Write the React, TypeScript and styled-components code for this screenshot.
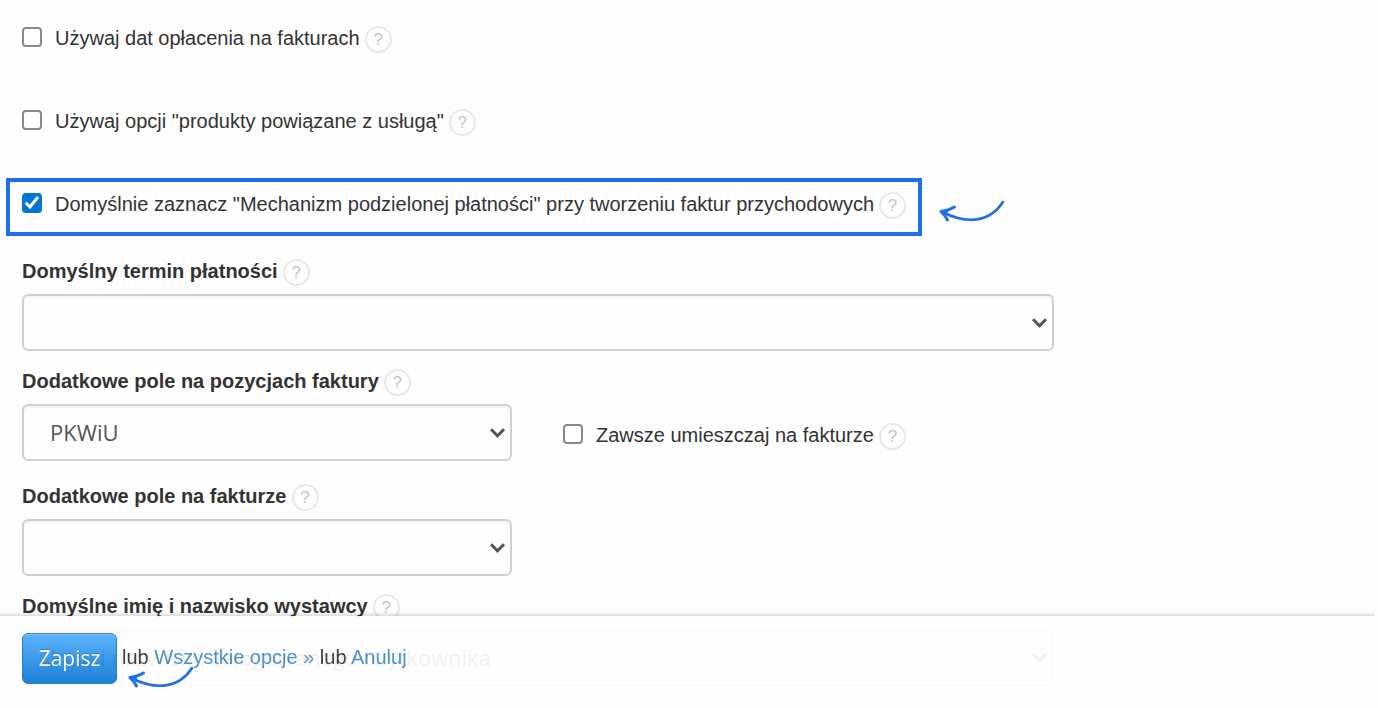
import React, { useId } from "react";
import styled, { createGlobalStyle } from "styled-components";

const GlobalStyle = createGlobalStyle`
  *, *::before, *::after { box-sizing: border-box; }
  body {
    margin: 0;
    background: #fefefe;
    color: #333;
    font-family: "Liberation Sans", Arial, sans-serif;
    font-size: 20px;
    line-height: 27px;
  }
`;

const Form = styled.form`
  padding: 12px 0 22px 6px;
`;

const OptionList = styled.div`
  display: flex;
  flex-direction: column;
  gap: 25px;
`;

const OptionLine = styled.div`
  display: flex;
  align-items: center;
  gap: 16px;
`;

const Option = styled.div<{ $highlighted?: boolean }>`
  display: flex;
  width: fit-content;
  padding: 10px 12px 13px 12px;
  border: 4px solid ${(p) => (p.$highlighted ? "#1f70e8" : "transparent")};
`;

const CheckLine = styled.div`
  display: flex;
  align-items: center;
  gap: 5px;
`;

const CheckLabel = styled.label`
  display: flex;
  gap: 13px;
  padding-bottom: 2px;
  line-height: 25px;
`;

const Checkbox = styled.input`
  appearance: none;
  display: grid;
  place-items: center;
  flex: none;
  width: 20px;
  height: 20px;
  margin: 1px 0 0;
  border: 2px solid #8a8a8a;
  border-radius: 4px;
  background: #fff;

  &:checked {
    border-color: #0075d3;
    background: #0075d3;
  }

  &:checked::before {
    content: "";
    width: 16px;
    height: 16px;
    background: #fff;
    clip-path: polygon(4% 54%, 17% 41%, 36% 61%, 80% 6%, 95% 18%, 38% 89%);
  }
`;

const Help = styled.button`
  flex: none;
  width: 27px;
  height: 27px;
  padding: 0;
  border: 2px solid #e8e8e8;
  border-radius: 50%;
  background: #fefefe;
  color: #c4c4c4;
  font: 17px/23px "Liberation Sans", Arial, sans-serif;
  text-align: center;
`;

const Fields = styled.div`
  display: flex;
  flex-direction: column;
  gap: 18px;
  max-width: 1048px;
  padding: 23px 0 0 16px;
`;

const FieldPair = styled.div`
  display: flex;
  align-items: flex-end;
  gap: 51px;
  padding-bottom: 5px;
`;

const SideOption = styled.div`
  padding-bottom: 11px;
`;

const FieldBox = styled.div<{ $half?: boolean }>`
  width: 100%;
  max-width: ${(p) => (p.$half ? "490px" : "none")};
`;

const FieldHead = styled.div`
  display: flex;
  gap: 5px;
  margin-bottom: 8px;
`;

const FieldLabel = styled.label`
  font-weight: bold;
  line-height: 25px;
`;

const SelectShell = styled.div`
  display: grid;
  align-items: center;

  > * { grid-area: 1 / 1; }
  > svg {
    justify-self: end;
    margin-right: 6px;
    pointer-events: none;
  }
`;

const Select = styled.select`
  appearance: none;
  width: 100%;
  height: 57px;
  padding: 0 40px 2px 26px;
  border: 2px solid #d0d0d0;
  border-radius: 6px;
  background: #fefefe;
  box-shadow: inset 0 2px 2px rgba(0, 0, 0, 0.05);
  color: #555;
  font: 22px "Open Sans", "Noto Sans", sans-serif;
`;

const ActionBar = styled.footer`
  position: fixed;
  left: 0;
  right: 3px;
  bottom: 0;
  display: flex;
  gap: 5px;
  height: 92px;
  padding: 17px 0 0 22px;
  background: #fefefe;
  box-shadow: 0 -1px 3px 1px rgba(0, 0, 0, 0.16);
  clip-path: inset(-6px 0 0 0);
  opacity: 0.92;
`;

const SaveButton = styled.button`
  width: 95px;
  height: 51px;
  padding: 0 0 2px;
  border: 1px solid #1c78c2;
  border-radius: 6px;
  background: linear-gradient(#4fadfb, #0a76d6);
  box-shadow: inset 0 1px 0 rgba(255, 255, 255, 0.25);
  color: #fff;
  font: 21px "Open Sans", "Noto Sans", sans-serif;
  text-shadow: 0 -1px 0 rgba(0, 0, 0, 0.25);
`;

const ActionText = styled.p`
  margin: 11px 0 0;
`;

const ActionLink = styled.a`
  color: #428bca;
  text-decoration: none;
`;

const LineNote = styled.div`
  display: flex;
  padding-top: 10px;
`;

const BarNote = styled.div`
  position: fixed;
  left: 127px;
  bottom: 17px;
  display: flex;
  pointer-events: none;
`;

const Chevron = () => (
  <svg width="17" height="12" viewBox="0 0 17 12" fill="none" aria-hidden="true">
    <path d="M2 2.2 L8.5 8.8 L15 2.2" stroke="#555" strokeWidth="3" />
  </svg>
);

const Arrow = () => (
  <svg width="68" height="26" viewBox="0 0 68 26" fill="none" stroke="#1f70e8" strokeLinecap="round" strokeLinejoin="round" aria-hidden="true">
    <path d="M65 3 C52 23 30 25.5 5 13.5" strokeWidth="2.6" />
    <path d="M16.5 8 C12 10.5 8 11.5 3 12.5 C5.5 15 8 18 9.5 21" strokeWidth="3" />
    <path d="M3 12 L10 11.5 L7 17 Z" fill="#1f70e8" strokeWidth="1.5" />
  </svg>
);

const HelpMark = () => (
  <Help type="button" aria-label="Pomoc">?</Help>
);

function Check({ label, checked }: { label: string; checked?: boolean }) {
  const id = useId();
  return (
    <CheckLine>
      <CheckLabel htmlFor={id}>
        <Checkbox id={id} type="checkbox" defaultChecked={checked} />
        {label}
      </CheckLabel>
      <HelpMark />
    </CheckLine>
  );
}

function Field({ label, value = "", half }: { label: string; value?: string; half?: boolean }) {
  const id = useId();
  return (
    <FieldBox $half={half}>
      <FieldHead>
        <FieldLabel htmlFor={id}>{label}</FieldLabel>
        <HelpMark />
      </FieldHead>
      <SelectShell>
        <Select id={id} defaultValue={value}>
          <option value={value}>{value}</option>
        </Select>
        <Chevron />
      </SelectShell>
    </FieldBox>
  );
}

export default function App() {
  return (
    <>
      <GlobalStyle />
      <Form onSubmit={(e) => e.preventDefault()}>
        <OptionList>
          <Option>
            <Check label="Używaj dat opłacenia na fakturach" />
          </Option>
          <Option>
            <Check label={'Używaj opcji "produkty powiązane z usługą"'} />
          </Option>
          <OptionLine>
            <Option $highlighted>
              <Check
                label={'Domyślnie zaznacz "Mechanizm podzielonej płatności" przy tworzeniu faktur przychodowych'}
                checked
              />
            </Option>
            <LineNote>
              <Arrow />
            </LineNote>
          </OptionLine>
        </OptionList>
        <Fields>
          <Field label="Domyślny termin płatności" />
          <FieldPair>
            <Field label="Dodatkowe pole na pozycjach faktury" value="PKWiU" half />
            <SideOption>
              <Check label="Zawsze umieszczaj na fakturze" />
            </SideOption>
          </FieldPair>
          <Field label="Dodatkowe pole na fakturze" half />
          <Field
            label="Domyślne imię i nazwisko wystawcy"
            value="Imię i nazwisko zalogowanego użytkownika"
          />
        </Fields>
        <ActionBar>
          <SaveButton type="submit">Zapisz</SaveButton>
          <ActionText>
            lub <ActionLink href="#wszystkie">Wszystkie opcje »</ActionLink> lub{" "}
            <ActionLink href="#anuluj">Anuluj</ActionLink>
          </ActionText>
        </ActionBar>
        <BarNote>
          <Arrow />
        </BarNote>
      </Form>
    </>
  );
}
